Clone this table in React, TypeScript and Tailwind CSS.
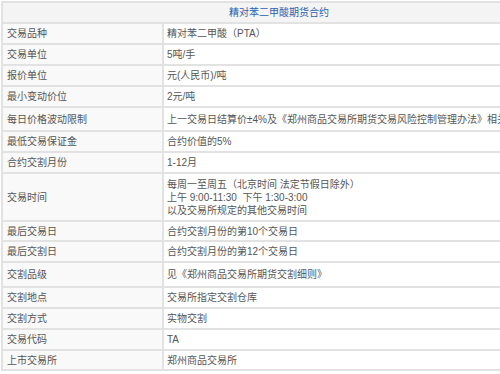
import React from "react";

type Row = { label: string; value: React.ReactNode; h: string };

const rows: Row[] = [
  { label: "交易品种", value: "精对苯二甲酸（PTA）", h: "h-[21px]" },
  { label: "交易单位", value: "5吨/手", h: "h-[21px]" },
  { label: "报价单位", value: "元(人民币)/吨", h: "h-[21px]" },
  { label: "最小变动价位", value: "2元/吨", h: "h-[21px]" },
  {
    label: "每日价格波动限制",
    value: "上一交易日结算价±4%及《郑州商品交易所期货交易风险控制管理办法》相关规定",
    h: "h-[24px]",
  },
  { label: "最低交易保证金", value: "合约价值的5%", h: "h-[21px]" },
  { label: "合约交割月份", value: "1-12月", h: "h-[21px]" },
  {
    label: "交易时间",
    value: (
      <div className="leading-[13px]">
        <div>每周一至周五（北京时间 法定节假日除外）</div>
        <div>上午 9:00-11:30&nbsp; 下午 1:30-3:00</div>
        <div>以及交易所规定的其他交易时间</div>
      </div>
    ),
    h: "h-[48px]",
  },
  { label: "最后交易日", value: "合约交割月份的第10个交易日", h: "h-[20px]" },
  { label: "最后交割日", value: "合约交割月份的第12个交易日", h: "h-[21px]" },
  { label: "交割品级", value: "见《郑州商品交易所期货交割细则》", h: "h-[25px]" },
  { label: "交割地点", value: "交易所指定交割仓库", h: "h-[21px]" },
  { label: "交割方式", value: "实物交割", h: "h-[21px]" },
  { label: "交易代码", value: "TA", h: "h-[21px]" },
  { label: "上市交易所", value: "郑州商品交易所", h: "h-[20px]" },
];

export default function App() {
  return (
    <div
      className="w-[500px] h-[374px] overflow-hidden bg-white pt-[1px] pl-[1px] text-[10px] text-[#555]"
      style={{ fontFamily: '"Liberation Sans", "Noto Sans CJK SC", sans-serif' }}
    >
      <div className="w-[556px] border-t-2 border-l-2 border-r-2 border-[#e2e2e2]">
        <div className="h-[21px] border-b-2 border-[#e2e2e2] bg-[#f4f4f4] flex items-center justify-center text-[#2d5fae]">
          精对苯二甲酸期货合约
        </div>
        {rows.map((r) => (
          <div key={r.label} className={`flex border-b-2 border-[#e2e2e2] ${r.h}`}>
            <div className="w-[161px] shrink-0 border-r-2 border-[#e2e2e2] bg-[#f9f9f9] pl-[4px] flex items-center">
              {r.label}
            </div>
            <div className="flex-1 pl-[3px] flex items-center whitespace-nowrap bg-white">
              {r.value}
            </div>
          </div>
        ))}
      </div>
    </div>
  );
}
